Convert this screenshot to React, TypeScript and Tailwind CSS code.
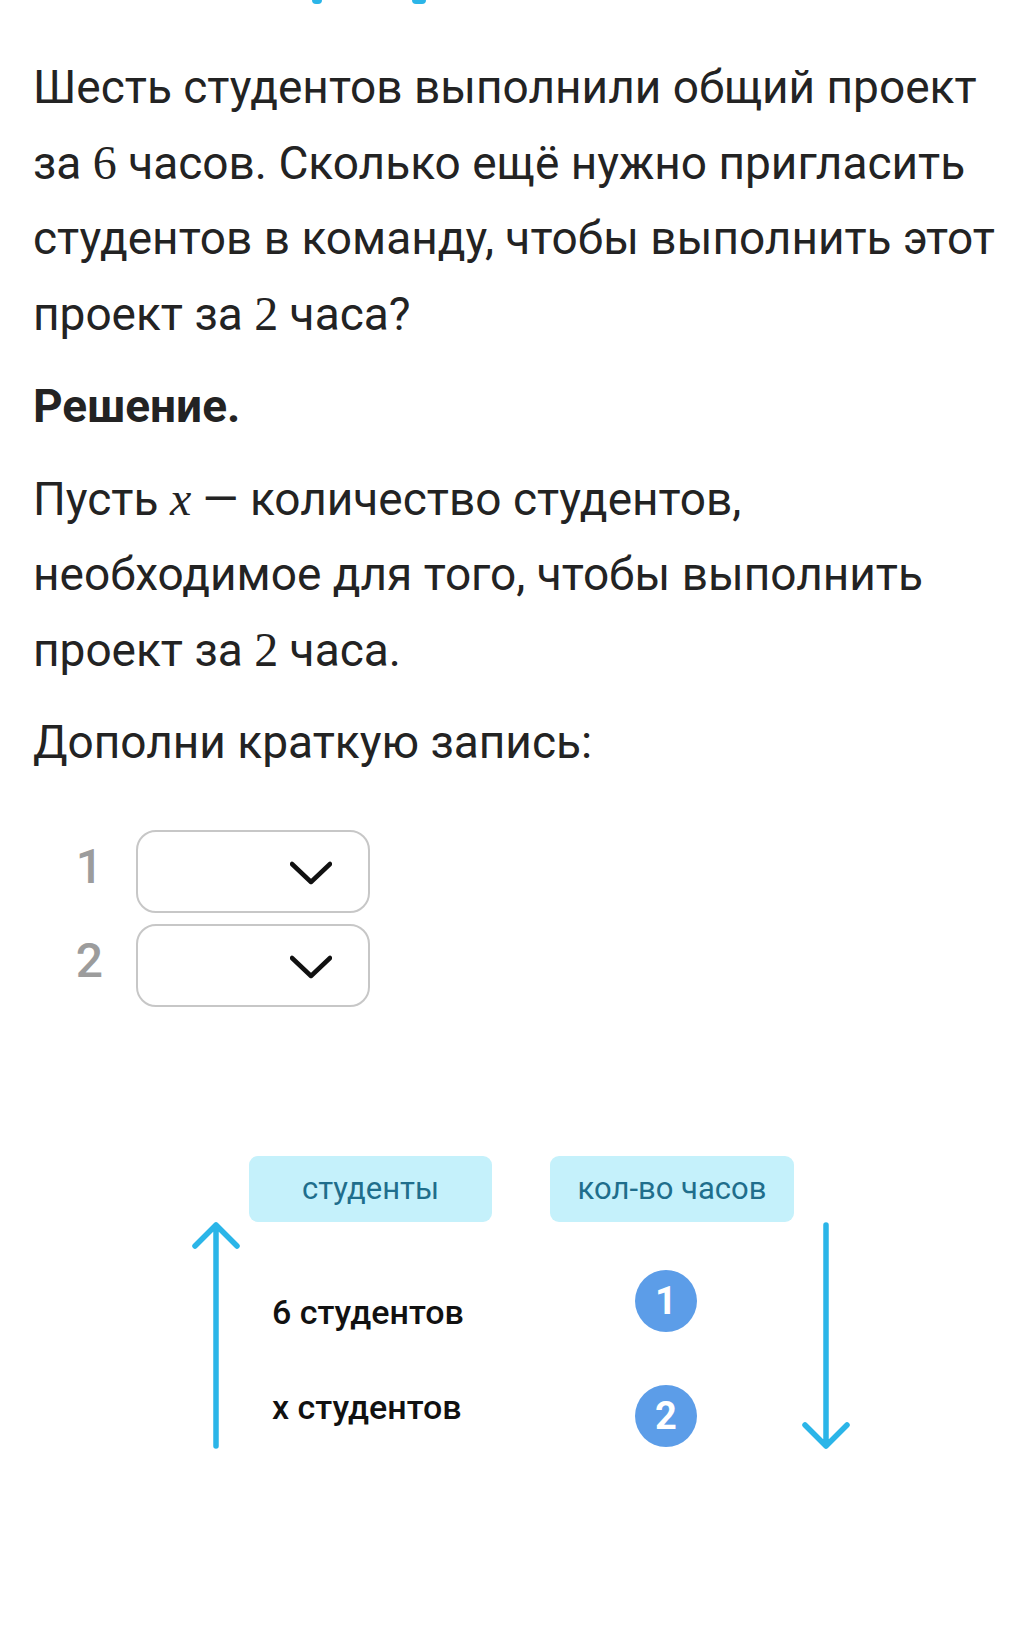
import type { ReactNode } from "react";

const sans = "font-['Roboto','Liberation_Sans',sans-serif]";
const serif = "font-['Liberation_Serif','DejaVu_Serif',serif]";

function M({ children, italic }: { children: ReactNode; italic?: boolean }) {
  return <span className={`${serif} text-[48px] ${italic ? "italic" : ""}`}>{children}</span>;
}

function Chevron() {
  return (
    <svg width="42" height="24" viewBox="0 0 42 24" fill="none">
      <path d="M2 3 L21 21 L40 3" stroke="#111" strokeWidth="4.5" strokeLinecap="round" strokeLinejoin="round" />
    </svg>
  );
}

function SelectRow({ n }: { n: string }) {
  return (
    <div className="flex items-center">
      <span className={`w-[103px] text-right text-[48px] font-medium leading-none text-[#9c9c9c] -mt-[10px] ${sans}`}>{n}</span>
      <div className="ml-[33px] flex h-[83px] w-[234px] items-center justify-end rounded-[20px] border-2 border-[#c7c7c7] pr-[36px] pt-[2px]">
        <Chevron />
      </div>
    </div>
  );
}

function Arrow({ down }: { down?: boolean }) {
  return (
    <svg width="48" height="227" viewBox="0 0 48 227" fill="none">
      {down ? (
        <path d="M24 3 V224 M3 203 L24 224 L45 203" stroke="#2bb5e8" strokeWidth="5.5" strokeLinecap="round" strokeLinejoin="round" />
      ) : (
        <path d="M24 224 V3 M3 24 L24 3 L45 24" stroke="#2bb5e8" strokeWidth="5.5" strokeLinecap="round" strokeLinejoin="round" />
      )}
    </svg>
  );
}

function Badge({ n }: { n: string }) {
  return (
    <div className={`flex h-[62px] w-[62px] items-center justify-center rounded-full bg-[#5c9de8] text-[38px] font-bold text-white ${sans}`}>
      {n}
    </div>
  );
}

export default function App() {
  return (
    <main className={`relative min-h-[1638px] w-full bg-white text-[#232323] ${sans}`}>
      <div className="flex h-0 gap-[90px] pl-[312px]">
        <span className="block h-[4px] w-[10px] rounded-b-full bg-[#2bb5e8]" />
        <span className="block h-[4px] w-[14px] rounded-b-full bg-[#2bb5e8]" />
      </div>

      <div className="space-y-[17px] pl-[33px] pt-[50px] text-[46px] leading-[75px]">
        <p>
          Шесть студентов выполнили общий проект
          <br />
          за <M>6</M> часов. Сколько ещё нужно пригласить
          <br />
          студентов в команду, чтобы выполнить этот
          <br />
          проект за <M>2</M> часа?
        </p>
        <p className="font-bold">Решение.</p>
        <p>
          Пусть <M italic>x</M> — количество студентов,
          <br />
          необходимое для того, чтобы выполнить
          <br />
          проект за <M>2</M> часа.
        </p>
        <p>Дополни краткую запись:</p>
      </div>

      <div className="mt-[50px] flex flex-col gap-[11px]">
        <SelectRow n="1" />
        <SelectRow n="2" />
      </div>

      <div className="ml-[192px] mt-[149px]">
        <div className="flex">
          <div className="ml-[57px] flex h-[66px] w-[243px] items-center justify-center rounded-[9px] bg-[#c5f1fb] text-[31px] text-[#1f6e8c]">
            студенты
          </div>
          <div className="ml-[58px] flex h-[66px] w-[244px] items-center justify-center rounded-[9px] bg-[#c5f1fb] text-[31px] text-[#1f6e8c]">
            кол-во часов
          </div>
        </div>
        <div className="flex">
          <Arrow />
          <div className="ml-[9px] w-[243px] pl-[23px] pt-[70px] text-[34px] font-medium leading-[40px] text-[#111]">
            <p>6 студентов</p>
            <p className="mt-[55px]">x студентов</p>
          </div>
          <div className="ml-[58px] flex w-[244px] flex-col items-center pr-[12px] pt-[48px]">
            <Badge n="1" />
            <div className="mt-[53px]">
              <Badge n="2" />
            </div>
          </div>
          <div className="ml-[8px]">
            <Arrow down />
          </div>
        </div>
      </div>
    </main>
  );
}
